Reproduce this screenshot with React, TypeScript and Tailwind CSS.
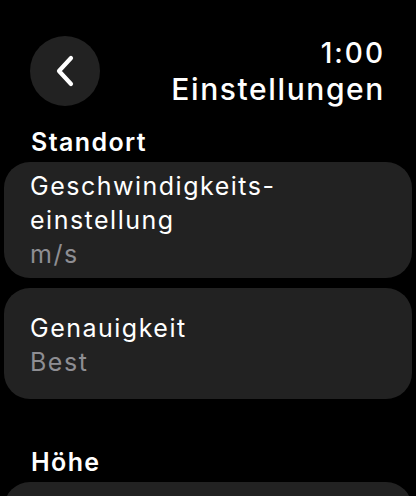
export default function App() {
  const font = { fontFamily: "Inter, 'Noto Sans', sans-serif" };
  return (
    <main
      className="w-[416px] h-[496px] overflow-hidden bg-black text-white"
      style={font}
    >
      <header className="flex items-start justify-between pl-[30px] pr-[31px] pt-[35px]">
        <button className="mt-[1px] flex h-[70px] w-[70px] items-center justify-center rounded-full bg-[#222222]">
          <svg width="22" height="34" viewBox="0 0 22 34" fill="none">
            <path
              d="M17 4 L5 17 L17 30"
              stroke="white"
              strokeWidth="4.2"
              strokeLinecap="round"
              strokeLinejoin="round"
            />
          </svg>
        </button>
        <div className="flex flex-col items-end">
          <span className="text-[28px] font-medium leading-[36px] tracking-[2px]">1:00</span>
          <span className="text-[30px] font-medium leading-[36px] tracking-[1.6px]">Einstellungen</span>
        </div>
      </header>

      <h2 className="mt-[19px] pl-[31px] text-[25px] font-semibold leading-[32px] tracking-[1.4px]">
        Standort
      </h2>

      <div className="mt-[4px] flex flex-col gap-[10px] px-[4px]">
        <div className="rounded-[26px] bg-[#222222] pl-[26px] pr-4 py-[7px]">
          <p className="text-[25px] leading-[34px] tracking-[1.5px]">
            Geschwindigkeits-
            <br />
            einstellung
          </p>
          <p className="text-[25px] leading-[34px] tracking-[1.5px] text-[#8e8e93]">m/s</p>
        </div>
        <div className="rounded-[26px] bg-[#222222] pl-[26px] pr-4 pt-[23px] pb-[20px]">
          <p className="text-[25px] leading-[34px] tracking-[1.5px]">Genauigkeit</p>
          <p className="text-[25px] leading-[34px] tracking-[1.5px] text-[#8e8e93]">Best</p>
        </div>
      </div>

      <h2 className="mt-[47px] pl-[31px] text-[25px] font-semibold leading-[32px] tracking-[1.4px]">
        Höhe
      </h2>
      <div className="mx-[4px] mt-[4px] h-[60px] rounded-[26px] bg-[#222222]" />
    </main>
  );
}
